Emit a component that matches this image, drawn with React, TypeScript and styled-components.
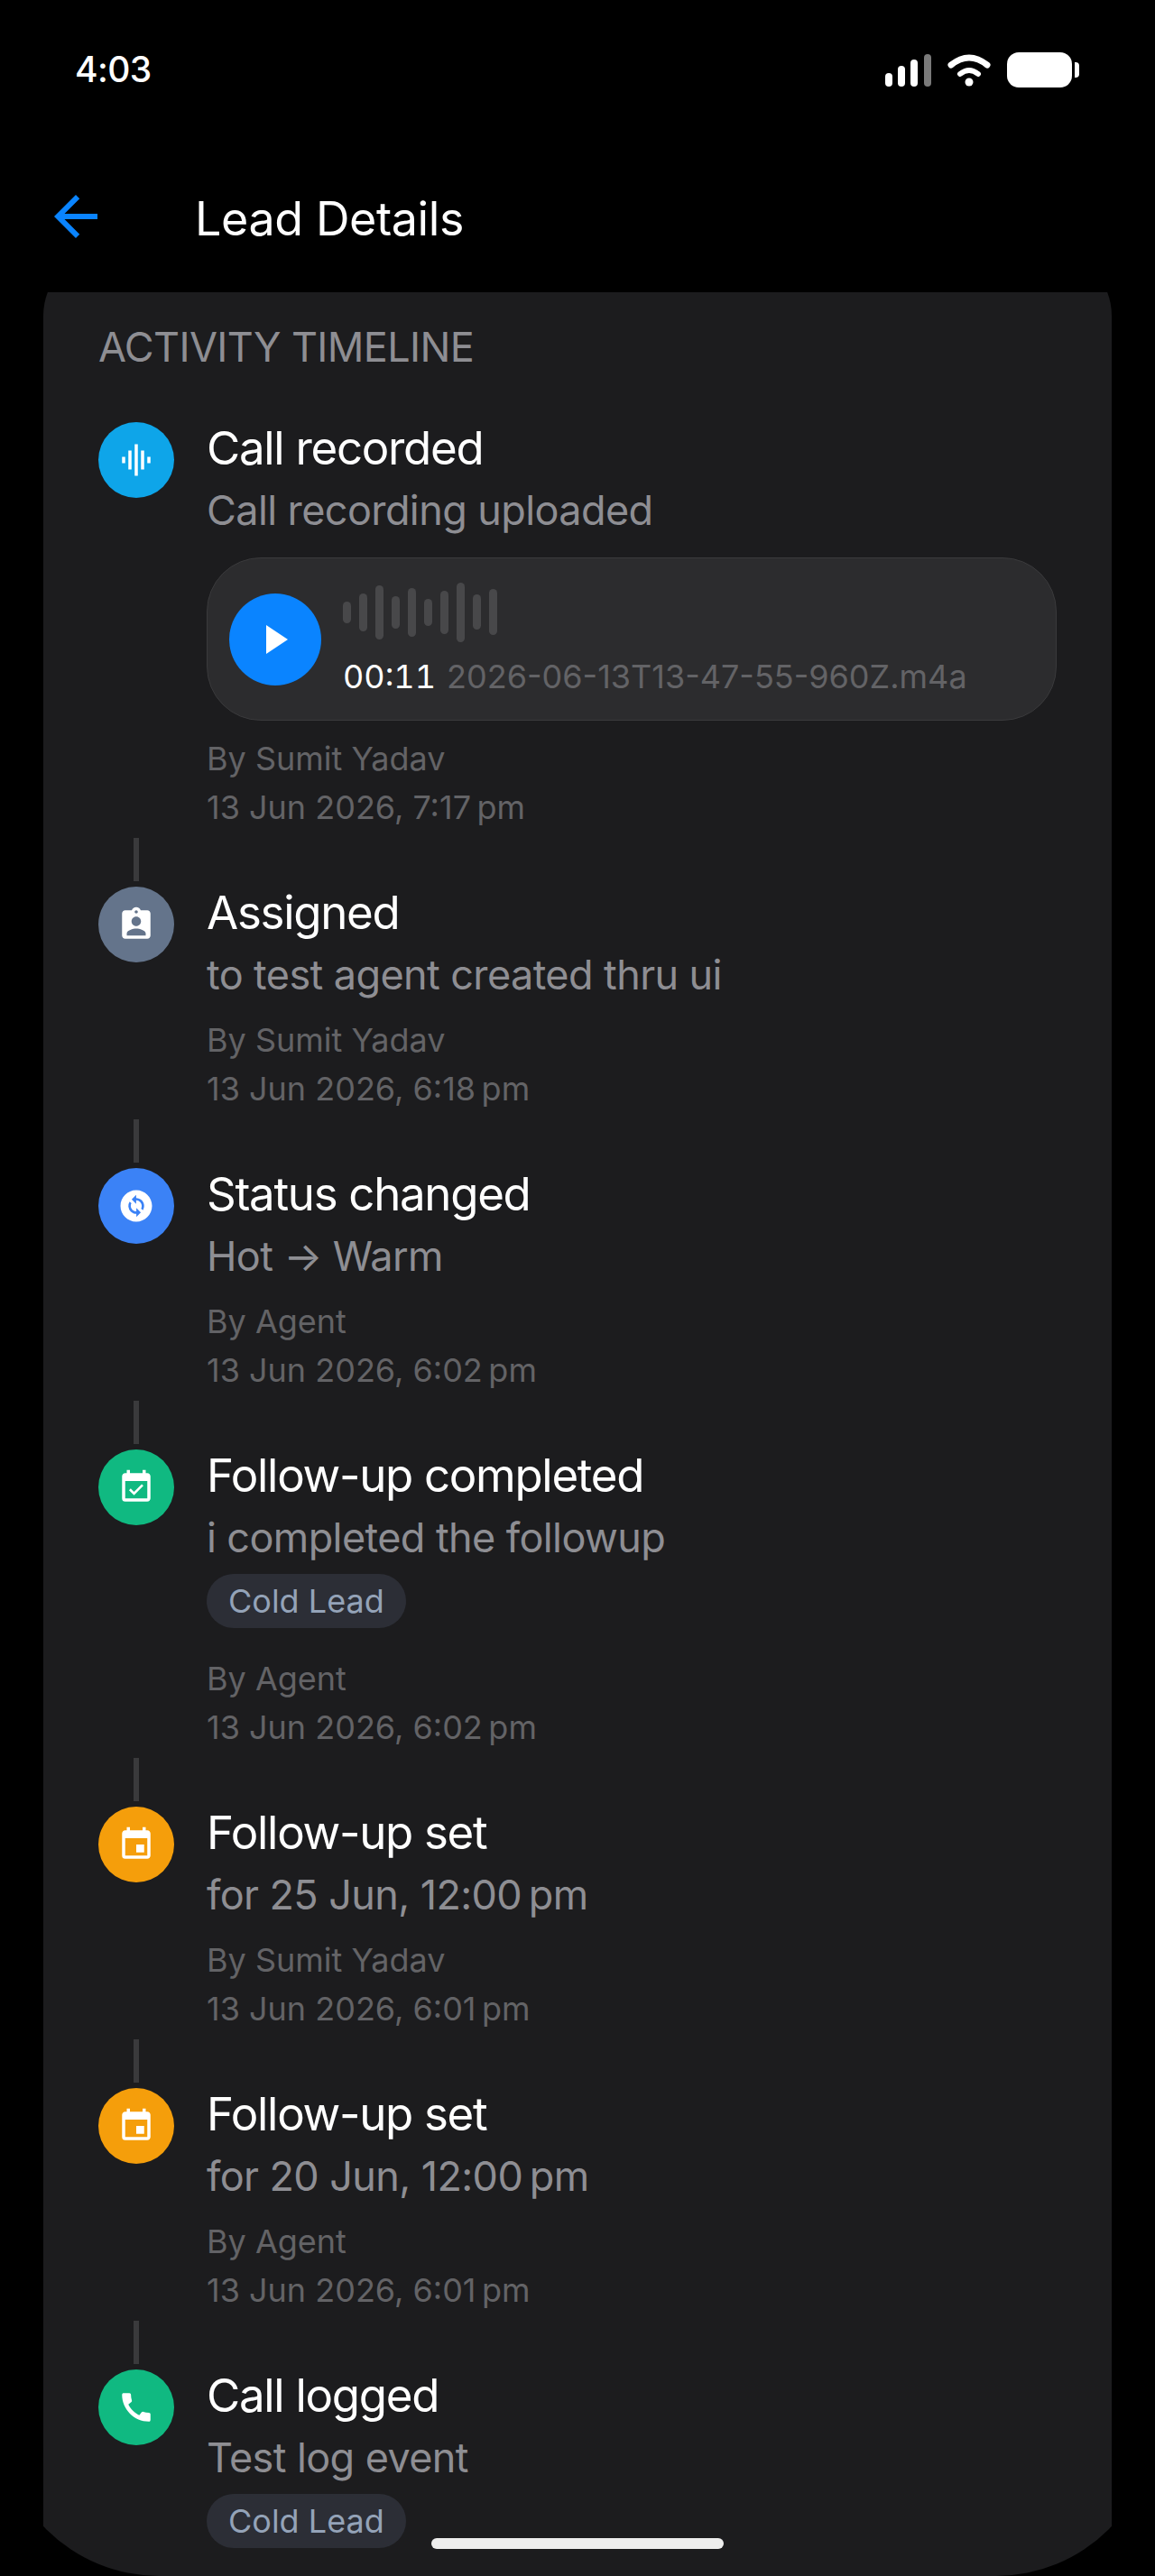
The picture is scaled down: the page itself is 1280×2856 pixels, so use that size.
import type { ReactNode } from "react";
import styled, { createGlobalStyle } from "styled-components";
import {
  MdArrowBack,
  MdAssignmentInd,
  MdCall,
  MdChangeCircle,
  MdEvent,
  MdEventAvailable,
  MdGraphicEq,
} from "react-icons/md";

const GlobalStyle = createGlobalStyle`
  html, body {
    margin: 0;
    background: #000;
  }
  body {
    font-family: Inter, "Noto Sans", sans-serif;
  }
`;

const Screen = styled.div`
  position: relative;
  width: 1280px;
  height: 2856px;
  display: flex;
  flex-direction: column;
  background: #000;
  border-radius: 0 0 176px 176px;
  overflow: hidden;
`;

const StatusBar = styled.div`
  height: 112px;
  padding: 0 84px;
  display: flex;
  justify-content: space-between;
  align-items: flex-start;
  box-sizing: border-box;
`;

const Clock = styled.span`
  margin-top: 52px;
  margin-left: -1px;
  font-size: 39px;
  line-height: 50px;
  font-weight: 500;
  letter-spacing: -0.6px;
  color: #fff;
`;

const StatusIcons = styled.svg`
  margin-top: 58px;
  width: 215px;
  height: 39px;
`;

const Header = styled.div`
  height: 212px;
  padding: 100px 0 0 61px;
  box-sizing: border-box;
  display: flex;
  align-items: flex-start;
`;

const BackArrow = styled(MdArrowBack)`
  margin: -8px 0 0 -13px;
  color: #0a84ff;
`;

const HeaderTitle = styled.h1`
  margin: 0 0 0 96px;
  font-size: 52px;
  line-height: 62px;
  font-weight: 400;
  letter-spacing: -0.4px;
  color: #fff;
`;

const Viewport = styled.div`
  flex: 1;
  min-height: 0;
  padding: 0 48px;
  display: flex;
  flex-direction: column;
  overflow: hidden;
`;

const Card = styled.section`
  flex: 1;
  margin-top: -46px;
  padding: 80px 60px 0 61px;
  background: #1c1c1e;
  border-radius: 72px 72px 0 0;
`;

const SectionLabel = styled.h2`
  margin: 0 0 50px;
  font-size: 45px;
  line-height: 54px;
  font-weight: 400;
  letter-spacing: -0.65px;
  color: #8e8e93;
`;

const Row = styled.div`
  display: flex;
  gap: 36px;
  padding-bottom: 7px;
`;

const Badge = styled.div<{ $color: string }>`
  flex: none;
  width: 84px;
  height: 84px;
  margin-top: 6px;
  border-radius: 50%;
  display: flex;
  align-items: center;
  justify-content: center;
  color: #fff;
  background: ${(p) => p.$color};
`;

const Body = styled.div`
  flex: 1;
  min-width: 0;
  padding-top: 2px;
`;

const Title = styled.div`
  font-size: 51px;
  line-height: 66px;
  font-weight: 400;
  letter-spacing: -1.3px;
  color: #fff;
`;

const Subtitle = styled.div`
  margin-top: 6px;
  font-size: 45px;
  line-height: 60px;
  letter-spacing: -0.6px;
  color: #8e8e93;
`;

const ByLine = styled.div`
  margin-top: 15px;
  font-size: 36px;
  line-height: 54px;
  color: #636366;
`;

const Timestamp = styled.div`
  font-size: 36px;
  line-height: 54px;
  color: #636366;
`;

const TagSlot = styled.div`
  height: 84px;
  padding-top: 10px;
  box-sizing: border-box;
`;

const Tag = styled.span`
  display: inline-block;
  padding: 0 24px;
  height: 60px;
  border-radius: 30px;
  background: #2c2e36;
  font-size: 36px;
  line-height: 60px;
  color: #94a3b8;
  vertical-align: top;
`;

const Connector = styled.div`
  width: 6px;
  height: 48px;
  margin-left: 39px;
  background: #3a3a3c;
`;

const Player = styled.div`
  margin-top: 22px;
  margin-bottom: 3px;
  width: 942px;
  height: 181px;
  padding-left: 24px;
  box-sizing: border-box;
  display: flex;
  align-items: center;
  gap: 24px;
  background: #2c2c2e;
  border: 1px solid #3a3a3c;
  border-radius: 60px;
`;

const PlayButton = styled.div`
  flex: none;
  width: 102px;
  height: 102px;
  border-radius: 50%;
  background: #0a84ff;
  display: flex;
  align-items: center;
  justify-content: center;
`;

const PlayGlyph = styled.svg`
  width: 24px;
  height: 32px;
  margin-left: 3px;
`;

const PlayerInfo = styled.div`
  display: flex;
  flex-direction: column;
  gap: 16px;
`;

const Wave = styled.div`
  height: 66px;
  display: flex;
  align-items: center;
  gap: 9px;
`;

const WaveBar = styled.div<{ $h: number }>`
  width: 9px;
  height: ${(p) => p.$h}px;
  border-radius: 5px;
  background: #48484a;
`;

const TrackLine = styled.div`
  display: flex;
  gap: 12px;
  font-size: 36px;
  line-height: 44px;
`;

const TrackTime = styled.span`
  font-variant-numeric: tabular-nums;
  color: #fff;
`;

const TrackName = styled.span`
  color: #636366;
`;

const HomeIndicator = styled.div`
  position: absolute;
  left: 478px;
  top: 2814px;
  width: 324px;
  height: 12px;
  border-radius: 6px;
  background: #ededed;
`;

const waveHeights = [24, 42, 60, 36, 54, 30, 48, 66, 39, 51];

type Activity = {
  color: string;
  icon: ReactNode;
  title: string;
  detail: string;
  tag?: string;
  player?: boolean;
  by?: string;
  when?: string;
};

const activities: Activity[] = [
  {
    color: "#0ea5e9",
    icon: <MdGraphicEq size={42} />,
    title: "Call recorded",
    detail: "Call recording uploaded",
    player: true,
    by: "By Sumit Yadav",
    when: "13 Jun 2026, 7:17\u202fpm",
  },
  {
    color: "#64748b",
    icon: <MdAssignmentInd size={42} />,
    title: "Assigned",
    detail: "to test agent created thru ui",
    by: "By Sumit Yadav",
    when: "13 Jun 2026, 6:18\u202fpm",
  },
  {
    color: "#3b82f6",
    icon: <MdChangeCircle size={42} />,
    title: "Status changed",
    detail: "Hot → Warm",
    by: "By Agent",
    when: "13 Jun 2026, 6:02\u202fpm",
  },
  {
    color: "#10b981",
    icon: <MdEventAvailable size={42} />,
    title: "Follow-up completed",
    detail: "i completed the followup",
    tag: "Cold Lead",
    by: "By Agent",
    when: "13 Jun 2026, 6:02\u202fpm",
  },
  {
    color: "#f59e0b",
    icon: <MdEvent size={42} />,
    title: "Follow-up set",
    detail: "for 25 Jun, 12:00\u202fpm",
    by: "By Sumit Yadav",
    when: "13 Jun 2026, 6:01\u202fpm",
  },
  {
    color: "#f59e0b",
    icon: <MdEvent size={42} />,
    title: "Follow-up set",
    detail: "for 20 Jun, 12:00\u202fpm",
    by: "By Agent",
    when: "13 Jun 2026, 6:01\u202fpm",
  },
  {
    color: "#10b981",
    icon: <MdCall size={42} />,
    title: "Call logged",
    detail: "Test log event",
    tag: "Cold Lead",
  },
];

const AudioPlayer = () => (
  <Player>
    <PlayButton>
      <PlayGlyph viewBox="0 0 24 32">
        <path d="M0 0 L24 16 L0 32 Z" fill="#fff" />
      </PlayGlyph>
    </PlayButton>
    <PlayerInfo>
      <Wave>
        {waveHeights.map((h, i) => (
          <WaveBar key={i} $h={h} />
        ))}
      </Wave>
      <TrackLine>
        <TrackTime>00:11</TrackTime>
        <TrackName>2026-06-13T13-47-55-960Z.m4a</TrackName>
      </TrackLine>
    </PlayerInfo>
  </Player>
);

const App = () => (
  <>
    <GlobalStyle />
    <Screen>
      <StatusBar>
        <Clock>4:03</Clock>
        <StatusIcons viewBox="0 0 215 39">
          <rect x="0" y="23" width="8" height="15" rx="4" fill="#fff" />
          <rect x="14" y="15" width="8" height="23" rx="4" fill="#fff" />
          <rect x="28" y="8" width="8" height="30" rx="4" fill="#fff" />
          <rect x="43" y="2" width="8" height="36" rx="4" fill="#7a7a7a" />
          <g transform="translate(69 2)" fill="none" stroke="#fff" strokeLinecap="round">
            <path d="M4 12 Q24 -4 44 12" strokeWidth="7" />
            <path d="M14 22 Q24 14 34 22" strokeWidth="6" />
            <circle cx="24" cy="31" r="4.5" fill="#fff" stroke="none" />
          </g>
          <rect x="135" y="0" width="72" height="39" rx="13" fill="#fff" />
          <path d="M210 11 h1 a4 4 0 0 1 4 4 v9 a4 4 0 0 1 -4 4 h-1 Z" fill="#fff" />
        </StatusIcons>
      </StatusBar>
      <Header>
        <BackArrow size={72} />
        <HeaderTitle>Lead Details</HeaderTitle>
      </Header>
      <Viewport>
        <Card>
          <SectionLabel>ACTIVITY TIMELINE</SectionLabel>
          {activities.map((a, i) => (
            <div key={i}>
              {i > 0 && <Connector />}
              <Row>
                <Badge $color={a.color}>{a.icon}</Badge>
                <Body>
                  <Title>{a.title}</Title>
                  <Subtitle>{a.detail}</Subtitle>
                  {a.player && <AudioPlayer />}
                  {a.tag && (
                    <TagSlot>
                      <Tag>{a.tag}</Tag>
                    </TagSlot>
                  )}
                  {a.by && <ByLine>{a.by}</ByLine>}
                  {a.when && <Timestamp>{a.when}</Timestamp>}
                </Body>
              </Row>
            </div>
          ))}
        </Card>
      </Viewport>
      <HomeIndicator />
    </Screen>
  </>
);

export default App;
